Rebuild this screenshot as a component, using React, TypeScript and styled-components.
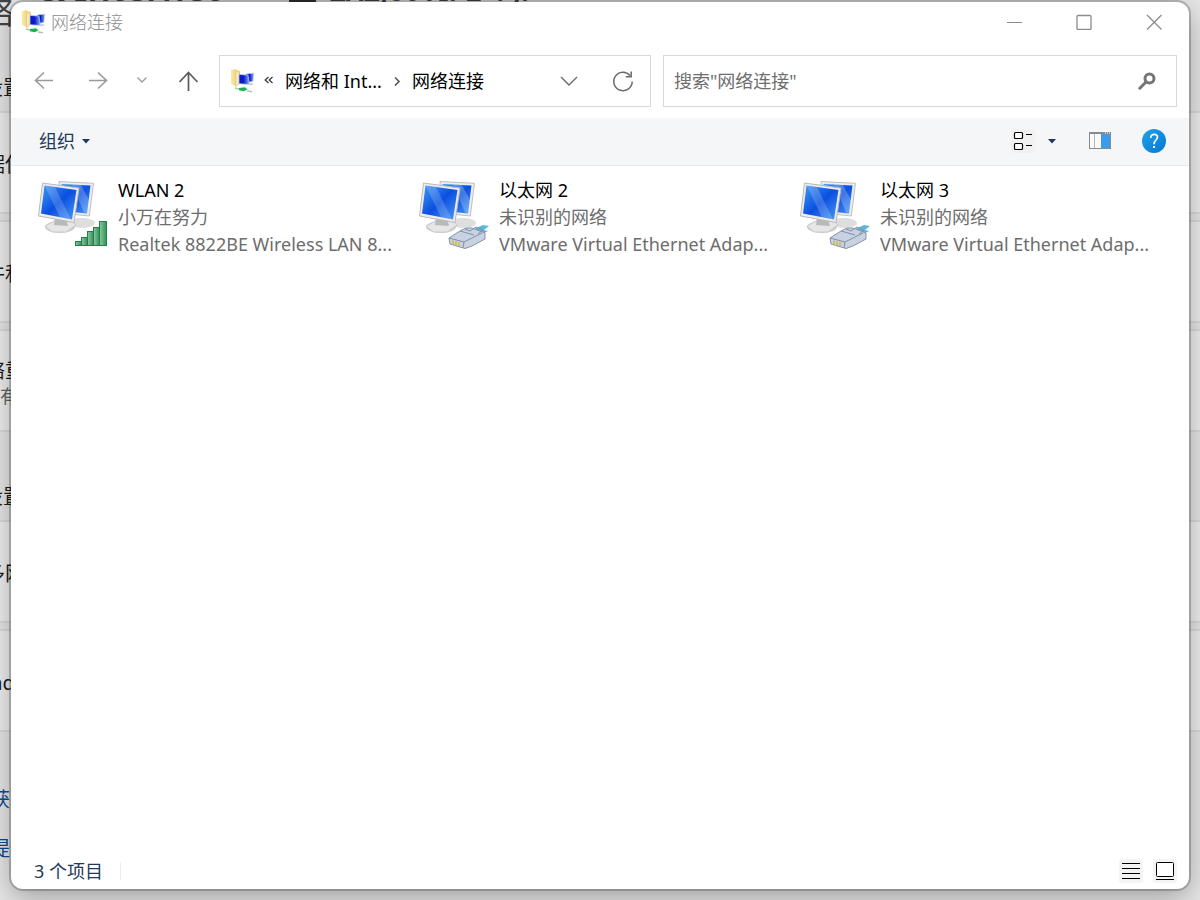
import React from "react";
import styled, { createGlobalStyle } from "styled-components";

const GlobalStyle = createGlobalStyle`
  *, *::before, *::after { box-sizing: border-box; }
  body {
    margin: 0;
    background: #dcdcdc;
    font-family: "Noto Sans", "Noto Sans CJK SC", sans-serif;
    font-size: 18px;
    line-height: 27px;
    color: #000;
  }
  button, input { font: inherit; color: inherit; }
`;

const Desktop = styled.div`
  position: relative;
  min-height: 100vh;
  display: flex;
  flex-direction: column;
  overflow: hidden;
`;

/* Settings page that lies behind the window */
const Backdrop = styled.div`
  position: absolute;
  inset: 0;
  overflow: hidden;
  white-space: nowrap;
  font-size: 20px;
  color: #1c1c1c;
  background: #e6e6e6;
`;
const PageHead = styled.div`
  display: flex;
  align-items: flex-start;
  height: 32px;
  margin-left: -18px;
  color: #444;
`;
const PageTitle = styled.div`
  width: 56px;
  font-size: 32px;
  line-height: 24px;
`;
const PageTrail = styled.div`
  display: flex;
  align-items: center;
  gap: 28px;
  height: 48px;
  margin-top: -36px;
  font-size: 36px;
  font-weight: 600;
  line-height: 48px;
`;
const TrailBlock = styled.span`
  width: 27px;
  height: 28px;
  background: #333;
`;
const TrailNetwork = styled.span`
  padding-top: 3px;
  margin-left: -14px;
  font-size: 28px;
`;
const Heading = styled.h2`
  margin: 0 0 0 -17px;
  display: flex;
  align-items: flex-end;
  height: ${(p: { $first?: boolean }) => (p.$first ? 79 : 88)}px;
  padding-bottom: 10px;
  font-size: 20px;
  font-weight: 400;
`;
const Card = styled.div`
  height: 103px;
  margin-bottom: 6px;
  padding-top: 3px;
  display: flex;
  flex-direction: column;
  justify-content: center;
  background: #eeeeee;
  border: 2px solid #dadada;
  border-width: 2px 0;
`;
const CardTitle = styled.div`
  margin-left: -15px;
`;
const CardNote = styled.div`
  margin-left: -18px;
  font-size: 18px;
  line-height: 24px;
  color: #666;
`;
const CardGroup = styled.div`
  & > div:last-child { margin-bottom: 0; }
`;
const HelpLinks = styled.div`
  display: flex;
  flex-direction: column;
  align-items: flex-start;
  gap: 22px;
  padding-top: 54px;
  margin-left: -10px;
`;
const HelpLink = styled.a`
  color: #0f4a94;
  text-decoration: none;
`;

const Window = styled.main`
  position: relative;
  flex: 1;
  display: flex;
  flex-direction: column;
  margin: 2px 11px 11px;
  border-radius: 12px;
  background: #fff;
  box-shadow: 0 0 0 2px rgba(0, 0, 0, 0.2), 0 8px 28px rgba(0, 0, 0, 0.32);
`;
const TitleBar = styled.header`
  display: flex;
  align-items: center;
  height: 40px;
  padding-left: 11px;
  color: #8f8f8f;
`;
const Title = styled.h1`
  flex: 1;
  margin: 0 0 0 5px;
  font-size: 18px;
  font-weight: 300;
`;
const IconButton = styled.button<{ $width: number; $color?: string }>`
  flex: none;
  width: ${(p) => p.$width}px;
  height: 40px;
  padding: 0;
  display: flex;
  align-items: center;
  justify-content: center;
  border: 0;
  background: none;
  color: ${(p) => p.$color ?? "#6a6a6a"};
`;
const NavBar = styled.nav`
  display: flex;
  align-items: center;
  padding: 13px 12px 11px 6px;
`;
const AddressBox = styled.div`
  flex: 419 1 0;
  min-width: 0;
  height: 52px;
  display: flex;
  align-items: center;
  padding-left: 11px;
  border: 1px solid #d9d9d9;
`;
const Crumbs = styled.div`
  flex: 1;
  display: flex;
  align-items: center;
  gap: 11px;
  padding-left: 9px;
  white-space: nowrap;
`;
const SearchBox = styled.form`
  flex: 512 1 0;
  min-width: 0;
  height: 52px;
  margin-left: 12px;
  display: flex;
  align-items: center;
  border: 1px solid #d9d9d9;
`;
const SearchInput = styled.input`
  flex: 1;
  min-width: 0;
  padding: 0 0 0 10px;
  border: 0;
  outline: 0;
  background: none;
  &::placeholder { color: #6e6e6e; opacity: 1; }
`;
const Toolbar = styled.div`
  display: flex;
  align-items: center;
  height: 48px;
  padding: 0 18px 1px 28px;
  background: #f4f6f8;
  border-bottom: 1px solid #e8e9eb;
`;
const OrganizeButton = styled.button`
  margin-right: auto;
  padding: 0;
  display: flex;
  align-items: center;
  gap: 7px;
  border: 0;
  background: none;
  color: #1e395b;
`;
const Content = styled.section`
  flex: 1;
  padding: 11px 8px 0 27px;
  display: grid;
  grid-template-columns: repeat(auto-fill, 381px);
  align-content: start;
`;
const Item = styled.article`
  display: flex;
  align-items: flex-start;
  gap: 8px;
`;
const ItemText = styled.div`
  width: 288px;
  white-space: nowrap;
`;
const ItemName = styled.div``;
const ItemDetail = styled.div`
  color: #6d6d6d;
`;
const StatusBar = styled.footer`
  display: flex;
  align-items: center;
  height: 36px;
  padding: 0 7px 0 23px;
  color: #1e395b;
`;
const StatusText = styled.span`
  margin-right: auto;
  padding-right: 17px;
  border-right: 1px solid #ededed;
  line-height: 18px;
`;

const Caret = () => (
  <svg width="8" height="5" viewBox="0 0 8 5" aria-hidden="true">
    <path d="M0 0h8L4 4.5z" fill="#1e395b" />
  </svg>
);

const FolderNetworkIcon = () => (
  <svg width="24" height="24" viewBox="0 0 24 24" aria-hidden="true">
    <defs>
      <linearGradient id="folder" x1="0" x2="1">
        <stop offset="0" stopColor="#fbeaa6" />
        <stop offset="1" stopColor="#e3c469" />
      </linearGradient>
      <linearGradient id="smallScreen" x1="0" x2="1">
        <stop offset="0" stopColor="#0a16b8" />
        <stop offset="0.45" stopColor="#0a1ed0" />
        <stop offset="1" stopColor="#8db6f6" />
      </linearGradient>
    </defs>
    <path d="M0 1l5-1 1 1.500 3 1v12l-4 2.500-5-2z" fill="url(#folder)" />
    <path d="M4.500 3.500L8 1.500v13.500l-3.500 2.500z" fill="#f9e9b0" stroke="#d9bd6a" strokeWidth="0.500" />
    <path d="M15 5l8-1-1 8.500-6 1z" fill="url(#smallScreen)" stroke="#cfdcf0" strokeWidth="0.700" />
    <path d="M8 5.500l9 .5 1.500 9.500-10.500-.8z" fill="url(#smallScreen)" stroke="#c6d3e8" strokeWidth="0.700" />
    <path d="M17.500 14.500l4-.5 1 1.500-4 1z" fill="#c9ced4" />
    <path d="M4 19l4 1m8 2l5 .8" stroke="#b6c2bc" strokeWidth="1.500" />
    <path d="M8 19l6-.8 2.500 2.300-4 1.800-4.500-1z" fill="#18b352" />
  </svg>
);

const Computers = () => (
  <>
    <ellipse cx="44" cy="43" rx="13" ry="5" fill="#dedede" />
    <ellipse cx="22" cy="47" rx="15" ry="6" fill="#d2d2d2" />
    <path d="M7 46l11-6h15l5 5-10 7H14z" fill="#e6e6e6" stroke="#c2c2c2" strokeWidth="0.800" />
    <path d="M21 1.500l34.500 1.800-4.200 32.700-29-3z" fill="#ececec" stroke="#c0c0c0" />
    <path d="M23.500 4l29 1.500L49 33.500 25 31z" fill="url(#screen)" />
    <path d="M34 4.500l9 .5L51 20l-1.800 13-3.200-.4z" fill="#fff" opacity="0.220" />
    <path d="M17 38l11 1 2 7-14-1z" fill="#b9b9b9" />
    <path d="M4.500 3L41 8 36 42.500.5 36z" fill="#ececec" stroke="#b9b9b9" />
    <path d="M6.500 5.500L38.500 10 34 39.500 3 33.500z" fill="url(#screen)" />
    <path d="M6.500 5.500L17 7l16 32.300-11-2.100z" fill="#fff" opacity="0.180" />
  </>
);

const ConnectionIcon = ({ kind }: { kind: "wifi" | "cable" }) => (
  <svg width="72" height="78" viewBox="0 -3 72 78" aria-hidden="true">
    <defs>
      <linearGradient id="screen" x1="0" y1="0" x2="1" y2="1">
        <stop offset="0" stopColor="#3f9bf5" />
        <stop offset="0.500" stopColor="#0b4fe0" />
        <stop offset="1" stopColor="#4b9af6" />
      </linearGradient>
      <linearGradient id="bar" x1="0" x2="1">
        <stop offset="0" stopColor="#8cc9a0" />
        <stop offset="1" stopColor="#2f9155" />
      </linearGradient>
    </defs>
    <Computers />
    {kind === "wifi" ? (
      <g fill="url(#bar)" stroke="#23804a">
        <rect x="37.500" y="61.500" width="6" height="4" />
        <rect x="43.500" y="57.500" width="6" height="8" />
        <rect x="49.500" y="51.500" width="6" height="14" />
        <rect x="55.500" y="47.500" width="6" height="18" />
        <rect x="61.500" y="41.500" width="7" height="24" />
      </g>
    ) : (
      <g>
        <path d="M55 49l9-4 6 1-5 4 4 1-9 5z" fill="#5bb9da" />
        <path d="M30 58l11-7 6-3h6l13 5v6l-13 7-7 2.500-15-4.500z" fill="#c9d2e0" stroke="#8793a9" />
        <path d="M30 58l15 4-1 6M45 62l18-9M41 51l14 4M46 49l5 2 6-4 7 3-5 4" fill="none" stroke="#8190aa" />
        <path d="M34 60.500v4m3-3.300v4m3-3.200v4" stroke="#cdbf57" strokeWidth="1.800" />
      </g>
    )}
  </svg>
);

const items: { name: string; status: string; device: string; kind: "wifi" | "cable" }[] = [
  { name: "WLAN 2", status: "小万在努力", device: "Realtek 8822BE Wireless LAN 8...", kind: "wifi" },
  { name: "以太网 2", status: "未识别的网络", device: "VMware Virtual Ethernet Adap...", kind: "cable" },
  { name: "以太网 3", status: "未识别的网络", device: "VMware Virtual Ethernet Adap...", kind: "cable" },
];

export default function App() {
  return (
    <Desktop>
      <GlobalStyle />
      <Backdrop aria-hidden="true">
        <PageHead>
          <PageTitle>络</PageTitle>
          <PageTrail>
            <span>&amp; Internet</span>
            <span>›</span>
            <TrailBlock />
            <TrailNetwork>ZXZJ80VIP2 4 Ji</TrailNetwork>
          </PageTrail>
        </PageHead>
        <Heading $first>设置</Heading>
        <CardGroup>
          <Card><CardTitle>据使用</CardTitle></Card>
          <Card><CardTitle>件和</CardTitle></Card>
          <Card>
            <CardTitle>络重置</CardTitle>
            <CardNote>所有</CardNote>
          </Card>
        </CardGroup>
        <Heading>设置</Heading>
        <CardGroup>
          <Card><CardTitle>多网络</CardTitle></Card>
          <Card><CardTitle>indows</CardTitle></Card>
        </CardGroup>
        <HelpLinks>
          <HelpLink href="#help">获取帮助</HelpLink>
          <HelpLink href="#feedback">提供反馈</HelpLink>
        </HelpLinks>
      </Backdrop>

      <Window>
        <TitleBar>
          <FolderNetworkIcon />
          <Title>网络连接</Title>
          <IconButton $width={70} $color="#8c8c8c" aria-label="最小化">
            <svg width="16" height="16" viewBox="0 0 16 16"><path d="M1 8.500h15" stroke="currentColor" /></svg>
          </IconButton>
          <IconButton $width={70} $color="#8c8c8c" aria-label="最大化">
            <svg width="16" height="16" viewBox="0 0 16 16"><rect x="1" y="1.500" width="14" height="14" rx="1" fill="none" stroke="currentColor" strokeWidth="1.300" /></svg>
          </IconButton>
          <IconButton $width={70} $color="#8c8c8c" aria-label="关闭">
            <svg width="16" height="16" viewBox="0 0 16 16"><path d="M1 1l14.500 14.500M15.500 1L1 15.500" stroke="currentColor" strokeWidth="1.300" /></svg>
          </IconButton>
        </TitleBar>

        <NavBar>
          <IconButton $width={54} $color="#9a9a9a" aria-label="后退">
            <svg width="20" height="20" viewBox="0 0 20 20" fill="none" stroke="currentColor" strokeWidth="1.600"><path d="M19 9.500H2M10 1.500l-8.500 8 8.500 8" /></svg>
          </IconButton>
          <IconButton $width={54} $color="#9a9a9a" aria-label="前进">
            <svg width="20" height="20" viewBox="0 0 20 20" fill="none" stroke="currentColor" strokeWidth="1.600"><path d="M1 9.500h17M10 1.500l8.500 8-8.500 8" /></svg>
          </IconButton>
          <IconButton $width={34} $color="#9a9a9a" aria-label="最近浏览的位置">
            <svg width="10" height="8" viewBox="0 0 10 8" fill="none" stroke="currentColor" strokeWidth="1.300"><path d="M.5 0.500L5 5 9.500.5" /></svg>
          </IconButton>
          <IconButton $width={60} $color="#5c5c5c" aria-label="上移">
            <svg width="20" height="20" viewBox="0 0 20 20" fill="none" stroke="currentColor" strokeWidth="1.700"><path d="M9.500 20V2M.5 11l9-9.500 9 9.500" /></svg>
          </IconButton>
          <AddressBox>
            <FolderNetworkIcon />
            <Crumbs>
              <svg width="10" height="10" viewBox="0 0 10 10" fill="none" stroke="#333" strokeWidth="1.200"><path d="M4.500 1L1.200 4l3.300 3M8.500 1L5.200 4l3.300 3" /></svg>
              <span>网络和 Int...</span>
              <svg width="8" height="10" viewBox="0 0 8 10" fill="none" stroke="#555" strokeWidth="1.600"><path d="M2 1.500L6 5.500 2 9.500" /></svg>
              <span>网络连接</span>
            </Crumbs>
            <IconButton $width={54} aria-label="以前的位置">
              <svg width="18" height="10" viewBox="0 0 18 10" fill="none" stroke="currentColor" strokeWidth="1.400"><path d="M1 1l8 8 8-8" /></svg>
            </IconButton>
            <IconButton $width={54} aria-label="刷新">
              <svg width="22" height="22" viewBox="0 0 22 22" fill="none" stroke="currentColor" strokeWidth="1.500"><path d="M20.200 11.500A9.200 9.200 0 1 1 18 5.500M19.200 1.500v5.200h-5.500" /></svg>
            </IconButton>
          </AddressBox>
          <SearchBox onSubmit={(e) => e.preventDefault()}>
            <SearchInput type="search" aria-label="搜索" placeholder={'搜索"网络连接"'} />
            <IconButton $width={58} $color="#757575" aria-label="开始搜索">
              <svg width="18" height="18" viewBox="0 0 18 18" fill="none" stroke="currentColor"><circle cx="11.500" cy="6.500" r="4.500" strokeWidth="3" /><path d="M8 10l-6.200 6.200" strokeWidth="3" strokeLinecap="round" /></svg>
            </IconButton>
          </SearchBox>
        </NavBar>

        <Toolbar>
          <OrganizeButton>组织 <Caret /></OrganizeButton>
          <IconButton $width={36} aria-label="更改视图">
            <svg width="24" height="24" viewBox="0 0 24 24">
              <rect width="24" height="24" rx="3" fill="#f1f1f2" />
              <g fill="#fff" stroke="#000" strokeWidth="1.200"><rect x="3.500" y="3.500" width="8" height="6" rx="1" /><rect x="3.500" y="14.500" width="8" height="6" rx="1" /></g>
              <path d="M15 5.500h6M15 16.500h6" stroke="#000" />
            </svg>
          </IconButton>
          <IconButton $width={22} aria-label="更多视图选项"><Caret /></IconButton>
          <IconButton $width={74} aria-label="预览窗格">
            <svg width="22" height="18" viewBox="0 0 22 18">
              <rect x="0.500" y="0.500" width="21" height="16" fill="#fafafa" stroke="#848b93" />
              <path d="M0 1h22" stroke="#848b93" strokeWidth="2" />
              <path d="M5.500 2v14" stroke="#b5b5b5" />
              <rect x="12" y="2" width="9" height="14" fill="#3e9be9" />
              <path d="M16 1h1m1 0h1m1 0h1" stroke="#fff" />
            </svg>
          </IconButton>
          <IconButton $width={34} aria-label="帮助">
            <svg width="24" height="24" viewBox="0 0 24 24">
              <defs><linearGradient id="help" x1="0" y1="0" x2="1" y2="1"><stop offset="0" stopColor="#1fa3ea" /><stop offset="1" stopColor="#0676d3" /></linearGradient></defs>
              <circle cx="12" cy="12" r="12" fill="url(#help)" />
              <path d="M8.700 9c-.4-4.500 7-4.800 6.800-.7-.1 2.700-3.500 3-3.500 7" fill="none" stroke="#fff" strokeWidth="1.700" />
              <rect x="11" y="17" width="2" height="2" fill="#fff" />
            </svg>
          </IconButton>
        </Toolbar>

        <Content>
          {items.map((item) => (
            <Item key={item.name}>
              <ConnectionIcon kind={item.kind} />
              <ItemText>
                <ItemName>{item.name}</ItemName>
                <ItemDetail>{item.status}</ItemDetail>
                <ItemDetail>{item.device}</ItemDetail>
              </ItemText>
            </Item>
          ))}
        </Content>

        <StatusBar>
          <StatusText>3 个项目</StatusText>
          <IconButton $width={34} aria-label="详细信息">
            <svg width="24" height="24" viewBox="0 0 24 24"><rect width="24" height="24" rx="3" fill="#f4f4f4" /><path d="M3 4.500h18M3 9.500h18M3 14.500h18M3 19.500h18" stroke="#000" /></svg>
          </IconButton>
          <IconButton $width={34} aria-label="大缩略图">
            <svg width="24" height="24" viewBox="0 0 24 24"><rect width="24" height="24" rx="3" fill="#f4f4f4" /><rect x="3.500" y="3.500" width="17" height="14" rx="1" fill="#fff" stroke="#000" /><path d="M3 20.500h18" stroke="#000" /></svg>
          </IconButton>
        </StatusBar>
      </Window>
    </Desktop>
  );
}
